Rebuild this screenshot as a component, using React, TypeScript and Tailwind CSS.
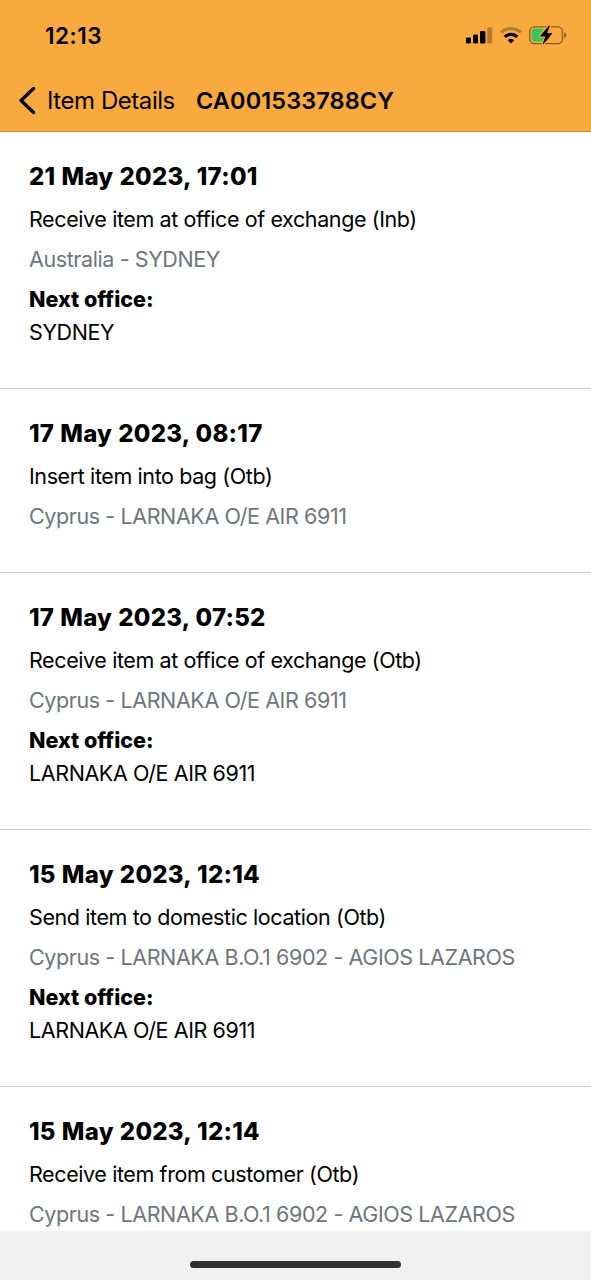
type TrackingEvent = {
  date: string;
  action: string;
  location: string;
  nextOffice?: string;
};

const events: TrackingEvent[] = [
  {
    date: '21 May 2023, 17:01',
    action: 'Receive item at office of exchange (Inb)',
    location: 'Australia - SYDNEY',
    nextOffice: 'SYDNEY',
  },
  {
    date: '17 May 2023, 08:17',
    action: 'Insert item into bag (Otb)',
    location: 'Cyprus - LARNAKA O/E AIR 6911',
  },
  {
    date: '17 May 2023, 07:52',
    action: 'Receive item at office of exchange (Otb)',
    location: 'Cyprus - LARNAKA O/E AIR 6911',
    nextOffice: 'LARNAKA O/E AIR 6911',
  },
  {
    date: '15 May 2023, 12:14',
    action: 'Send item to domestic location (Otb)',
    location: 'Cyprus - LARNAKA B.O.1 6902 - AGIOS LAZAROS',
    nextOffice: 'LARNAKA O/E AIR 6911',
  },
  {
    date: '15 May 2023, 12:14',
    action: 'Receive item from customer (Otb)',
    location: 'Cyprus - LARNAKA B.O.1 6902 - AGIOS LAZAROS',
  },
];

function SignalIcon() {
  return (
    <svg width="27" height="17" viewBox="0 0 27 17" aria-hidden="true">
      <rect x="0" y="10.5" width="5" height="6" rx="1.3" />
      <rect x="7" y="7.5" width="5" height="9" rx="1.3" />
      <rect x="14" y="4" width="5.4" height="12.5" rx="1.3" />
      <rect x="21.2" y="0.5" width="5" height="16" rx="1.3" opacity="0.28" />
    </svg>
  );
}

function WifiIcon() {
  return (
    <svg width="22" height="17" viewBox="0 0 22 17" fill="none" stroke="black" aria-hidden="true">
      <path d="M1.2 5.4a14.2 14.2 0 0 1 19.6 0" strokeWidth="3" opacity="0.28" />
      <path d="M4.7 9.8a9.2 9.2 0 0 1 12.6 0" strokeWidth="3.2" />
      <path d="M7.7 13.2a4.9 4.9 0 0 1 6.6 0L11 16.5z" fill="black" stroke="none" />
    </svg>
  );
}

function BatteryIcon() {
  return (
    <svg width="38" height="20" viewBox="0 0 38 20" aria-hidden="true">
      <rect x="0.8" y="1.8" width="32.6" height="16.8" rx="4.6" fill="none" stroke="black" strokeWidth="1.3" opacity="0.45" />
      <rect x="2.8" y="3.8" width="13" height="12.8" rx="2.8" fill="#32c759" />
      <path d="M35.3 7.2c2.4.8 2.4 5.2 0 6z" opacity="0.5" />
      <path
        d="M19.8.8 11.3 10.7c-.3.4-.1.9.4.9h4.6l-2.4 6.7c-.2.7.5 1.1 1 .5l8-9.8c.3-.4.1-.9-.4-.9h-4.4l2.7-6.8c.2-.7-.5-1-1-.5z"
        stroke="#f8aa3f"
        strokeWidth="2.4"
        paintOrder="stroke"
      />
    </svg>
  );
}

function StatusBar() {
  return (
    <div className="flex h-[70px] items-center justify-between pl-[45px] pr-6">
      <span className="pt-0.5 text-[22.5px] font-semibold leading-7 tracking-[0.5px]">12:13</span>
      <div className="flex items-center">
        <SignalIcon />
        <div className="ml-[7px] mr-[7px]">
          <WifiIcon />
        </div>
        <BatteryIcon />
      </div>
    </div>
  );
}

function NavBar() {
  return (
    <div className="flex h-[61px] items-center pl-[19px]">
      <svg width="17" height="28" viewBox="0 0 17 28" fill="none" stroke="black" strokeWidth="3.2" strokeLinecap="round" strokeLinejoin="round" aria-hidden="true">
        <path d="M14.6 1.5 2 13.5l12.6 12" />
      </svg>
      <span className="ml-[11px] w-[149px] whitespace-nowrap text-[24px] tracking-[-0.45px]">Item Details</span>
      <h1 className="whitespace-nowrap text-[23.5px] font-semibold tracking-[0.1px]">CA001533788CY</h1>
    </div>
  );
}

function EventRow({ event }: { event: TrackingEvent }) {
  return (
    <li className="border-b border-[#cfcfd1] px-[29px] pb-[39px] pt-[27px] text-[21.5px] leading-[33px] tracking-[-0.4px]">
      <h2 className="mb-2 text-[24px] font-extrabold leading-9 tracking-[0.25px] [word-spacing:0.6px]">{event.date}</h2>
      <p>{event.action}</p>
      <p className="mt-[7px] text-[#6d757d]">{event.location}</p>
      {event.nextOffice && (
        <>
          <p className="mt-[7px] font-extrabold tracking-normal">Next office:</p>
          <p>{event.nextOffice}</p>
        </>
      )}
    </li>
  );
}

export default function App() {
  return (
    <div className="flex h-[1280px] w-[591px] flex-col overflow-hidden bg-white font-['Inter',sans-serif] text-black">
      <header className="h-[132px] shrink-0 border-b border-[#c58a3a] bg-[#f8aa3f]">
        <StatusBar />
        <NavBar />
      </header>
      <ul className="min-h-0 flex-1 overflow-hidden">
        {events.map((event, i) => (
          <EventRow key={i} event={event} />
        ))}
      </ul>
      <footer className="flex h-[49px] shrink-0 justify-center bg-[#f1f1f1] pt-[30px]">
        <div className="h-[7px] w-[211px] rounded-full bg-[#303030]" />
      </footer>
    </div>
  );
}
